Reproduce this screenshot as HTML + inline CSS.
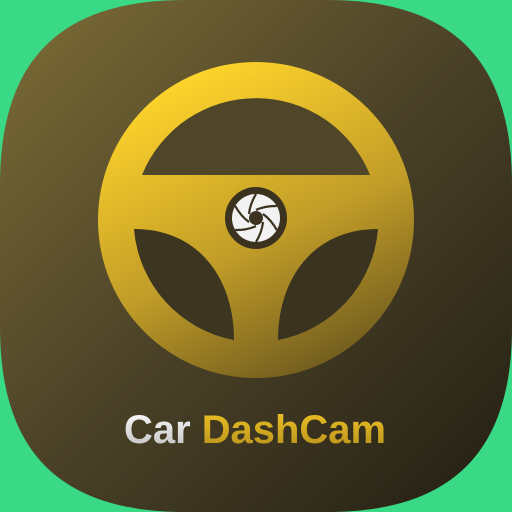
<!DOCTYPE html>
<html><head><style>
html,body{margin:0;padding:0;width:512px;height:512px;overflow:hidden;background:#3ad985}
svg{display:block}
</style></head><body>
<svg width="512" height="512" viewBox="0 0 512 512" xmlns="http://www.w3.org/2000/svg">
<defs>
<linearGradient id="bg" x1="0" y1="0" x2="1" y2="1">
<stop offset="0" stop-color="#7d6d36"/>
<stop offset="0.5" stop-color="#4a4127"/>
<stop offset="1" stop-color="#221e13"/>
</linearGradient>
<linearGradient id="wh" x1="0.25" y1="0.05" x2="0.7" y2="1">
<stop offset="0" stop-color="#ffd42b"/>
<stop offset="0.55" stop-color="#c29d28"/>
<stop offset="1" stop-color="#6e5a1e"/>
</linearGradient>
<linearGradient id="tw" x1="0" y1="0" x2="0" y2="1">
<stop offset="0" stop-color="#ffffff"/>
<stop offset="1" stop-color="#bdbdbd"/>
</linearGradient>
<linearGradient id="tg" x1="0" y1="0" x2="0" y2="1">
<stop offset="0" stop-color="#f0c425"/>
<stop offset="1" stop-color="#b58f1d"/>
</linearGradient>
</defs>
<path d="M0 185 C0 60 60 0 185 0 L327 0 C452 0 512 60 512 185 L512 327 C512 452 452 512 327 512 L185 512 C60 512 0 452 0 327 Z" fill="url(#bg)"/>
<circle cx="256" cy="220" r="158" fill="url(#wh)"/>
<path d="M142 175 A123 123 0 0 1 370 175 Z" fill="#4f4529"/>
<path d="M134 229 A123 123 0 0 0 234 340 C234 280 200 229 134 229 Z" fill="#3c3520"/>
<path d="M378 229 A123 123 0 0 1 278 340 C278 280 312 229 378 229 Z" fill="#3a331f"/>
<circle cx="256" cy="218" r="31" fill="#3b3320"/>
<circle cx="256" cy="218" r="24" fill="#f2f2f2"/>
<g stroke="#3b3320" stroke-width="2.2" fill="none" transform="translate(256 218)">
<path d="M0 -24 Q-6 -14 -7 -4"/>
<path d="M0 -24 Q-6 -14 -7 -4" transform="rotate(60)"/>
<path d="M0 -24 Q-6 -14 -7 -4" transform="rotate(120)"/>
<path d="M0 -24 Q-6 -14 -7 -4" transform="rotate(180)"/>
<path d="M0 -24 Q-6 -14 -7 -4" transform="rotate(240)"/>
<path d="M0 -24 Q-6 -14 -7 -4" transform="rotate(300)"/>
</g>
<circle cx="256" cy="218" r="7" fill="#3b3320"/>
<text x="124" y="443" font-family="Liberation Sans, sans-serif" font-weight="bold" font-size="40" textLength="262" lengthAdjust="spacingAndGlyphs"><tspan fill="url(#tw)">Car </tspan><tspan fill="url(#tg)">DashCam</tspan></text>
</svg>
</body></html>
